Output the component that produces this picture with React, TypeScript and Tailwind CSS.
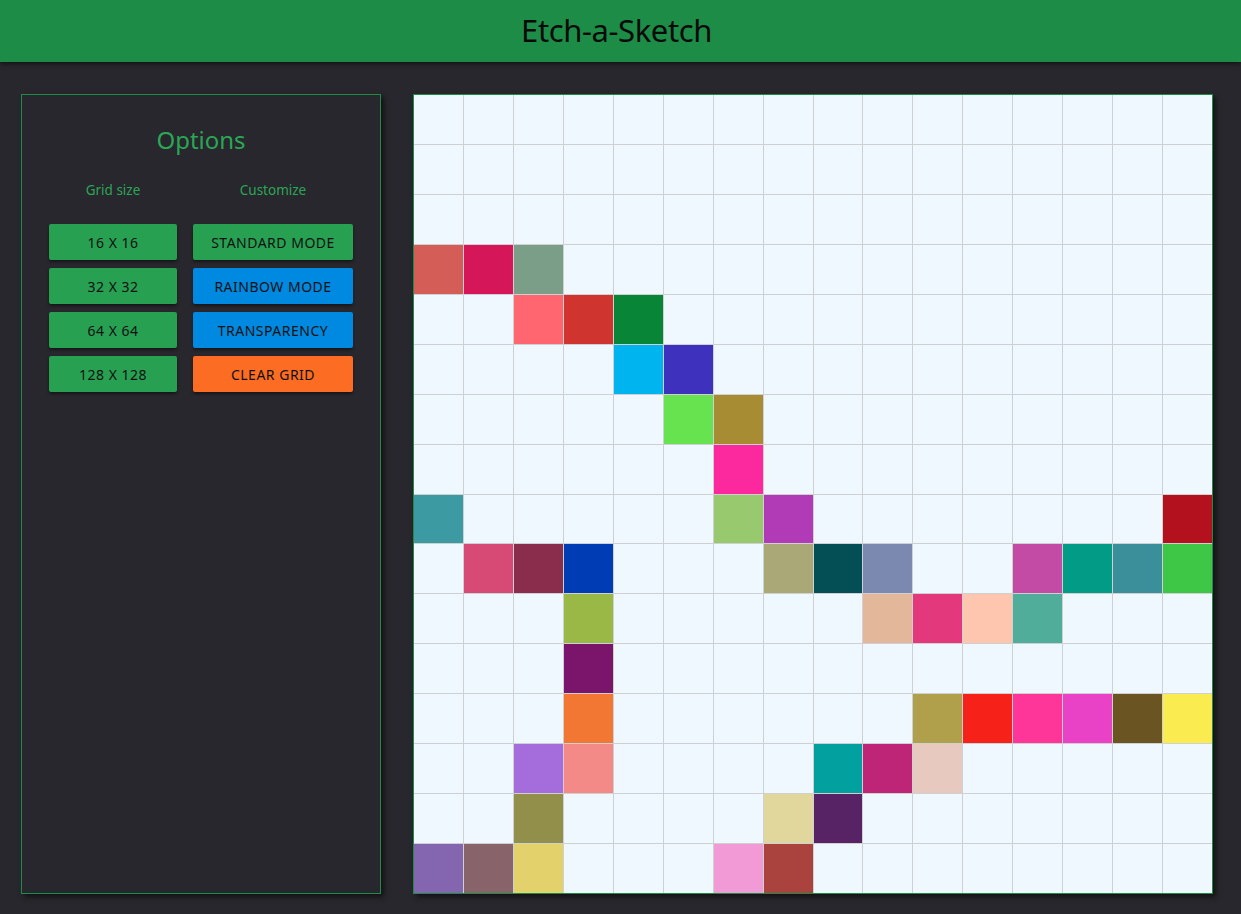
import React from 'react';

const SIZE = 16;

// painted cells: [row, col, colour]
const PAINTED: [number, number, string][] = [
  [3, 0, '#d45d58'], [3, 1, '#d5175a'], [3, 2, '#7a9e87'],
  [4, 2, '#ff6670'], [4, 3, '#cf352e'], [4, 4, '#088537'],
  [5, 4, '#00b4ef'], [5, 5, '#3e31be'],
  [6, 5, '#67e350'], [6, 6, '#a88c33'],
  [7, 6, '#fc289d'],
  [8, 0, '#3c9ba2'], [8, 6, '#98c96f'], [8, 7, '#b13bb7'], [8, 15, '#b2111d'],
  [9, 1, '#d84a76'], [9, 2, '#8a2c4b'], [9, 3, '#003db5'], [9, 7, '#aba877'],
  [9, 8, '#034f55'], [9, 9, '#7b89b0'], [9, 12, '#c34ba5'], [9, 13, '#029b86'],
  [9, 14, '#3a8f9a'], [9, 15, '#3ec646'],
  [10, 3, '#9ab845'], [10, 9, '#e3b799'], [10, 10, '#e3387b'], [10, 11, '#fec6ae'],
  [10, 12, '#50ad99'],
  [11, 3, '#7a156b'],
  [12, 3, '#f27733'], [12, 10, '#b0a04b'], [12, 11, '#f6221a'], [12, 12, '#fe369a'],
  [12, 13, '#e942c6'], [12, 14, '#6a5522'], [12, 15, '#faeb50'],
  [13, 2, '#a56ddb'], [13, 3, '#f48a87'], [13, 8, '#02a19f'], [13, 9, '#bf2577'],
  [13, 10, '#e8c9c0'],
  [14, 2, '#928f4b'], [14, 7, '#e1d79d'], [14, 8, '#572364'],
  [15, 0, '#8365b0'], [15, 1, '#886369'], [15, 2, '#e3d26b'], [15, 6, '#f19ad6'],
  [15, 7, '#aa423d'],
];

const colorAt = (r: number, c: number) => {
  const hit = PAINTED.find(([pr, pc]) => pr === r && pc === c);
  return hit ? hit[2] : '#eff7ff';
};

const sizeButtons = ['16 X 16', '32 X 32', '64 X 64', '128 X 128'];

const modeButtons = [
  { label: 'STANDARD MODE', cls: 'bg-[#27a052]' },
  { label: 'RAINBOW MODE', cls: 'bg-[#0089e0]' },
  { label: 'TRANSPARENCY', cls: 'bg-[#0089e0]' },
  { label: 'CLEAR GRID', cls: 'bg-[#fc6c22]' },
];

function OptionButton({ label, className }: { label: string; className: string }) {
  return (
    <button
      className={`h-9 rounded-[2px] text-[14px] tracking-[0.5px] text-[#111] shadow-[0_2px_3px_rgba(0,0,0,0.45)] ${className}`}
    >
      {label}
    </button>
  );
}

export default function App() {
  return (
    <div
      className="min-h-[914px] bg-[#28272d]"
      style={{ fontFamily: '"Noto Sans", "Open Sans", sans-serif' }}
    >
      {/* Header */}
      <header className="h-[62px] bg-[#1c8c47] flex items-center justify-center shadow-[0_2px_4px_rgba(0,0,0,0.5)] relative">
        <h1 className="text-[31px] text-[#0a0a0a] tracking-[-0.4px] -ml-2 -mt-px">Etch-a-Sketch</h1>
      </header>

      <main className="flex gap-8 pl-[21px] pt-8">
        {/* Options panel */}
        <aside className="w-[360px] h-[800px] border border-[#1c8c47] shadow-[3px_3px_5px_rgba(0,0,0,0.55)] flex flex-col items-center pt-[29px]">
          <h2 className="text-[24px] leading-8 text-[#2aa656]">Options</h2>

          <div className="mt-[24px] grid grid-cols-[128px_160px] gap-x-4">
            <div className="text-center text-[13.5px] leading-5 text-[#2aa656]">Grid size</div>
            <div className="text-center text-[13.5px] leading-5 text-[#2aa656]">Customize</div>
          </div>

          <div className="mt-[24px] grid grid-cols-[128px_160px] gap-x-4">
            <div className="flex flex-col gap-2">
              {sizeButtons.map((s) => (
                <OptionButton key={s} label={s} className="bg-[#27a052]" />
              ))}
            </div>
            <div className="flex flex-col gap-2">
              {modeButtons.map((b) => (
                <OptionButton key={b.label} label={b.label} className={b.cls} />
              ))}
            </div>
          </div>
        </aside>

        {/* Drawing grid */}
        <section className="w-[800px] h-[800px] border border-[#1c8c47] bg-[#cfd0d2] grid grid-cols-16 grid-rows-16 gap-px shadow-[3px_3px_5px_rgba(0,0,0,0.55)]">
          {Array.from({ length: SIZE * SIZE }, (_, i) => {
            const r = Math.floor(i / SIZE);
            const c = i % SIZE;
            return <div key={i} style={{ backgroundColor: colorAt(r, c) }} />;
          })}
        </section>
      </main>
    </div>
  );
}
